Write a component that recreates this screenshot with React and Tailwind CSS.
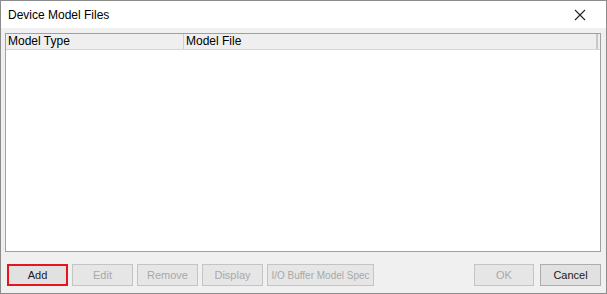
const font = { fontFamily: '"Liberation Sans", Arial, sans-serif' };

function Btn({ label, w, disabled, focused, small }) {
    return (
        <div
            className={`h-[22px] ${w} flex items-center justify-center whitespace-nowrap ${small ? "text-[10px]" : "text-[11px]"} border ${
                focused
                    ? "border-[#e8141c] border-2 bg-[#e1e1e1] text-[#1a1a1a]"
                    : disabled
                    ? "border-[#c4c4c4] bg-[#e6e6e6] text-[#a8a8a8]"
                    : "border-[#adadad] bg-[#e1e1e1] text-[#1a1a1a]"
            }`}
        >
            {label}
        </div>
    );
}

export default function App() {
    return (
        <div className="w-[607px] h-[294px] border border-[#8c8c8c] flex flex-col bg-[#f0f0f0]" style={font}>
            {/* Title bar */}
            <div className="h-[27px] bg-white flex items-center justify-between pl-[7px] pr-[20px]">
                <span className="text-[12px] text-black">Device Model Files</span>
                <svg width="12" height="12" viewBox="0 0 12 12">
                    <path d="M1 1L11 11M11 1L1 11" stroke="#222" strokeWidth="1.1" />
                </svg>
            </div>

            {/* List */}
            <div className="mt-[5px] ml-[4px] mr-[5px] h-[219px] bg-white border border-[#a0a0a0] flex flex-col">
                <div className="h-[16px] flex bg-[#efefef] border-b border-[#d6d6d6] text-[12px] text-black leading-[15px]">
                    <div className="w-[178px] pl-[2px] border-r border-[#cfcfcf]">Model Type</div>
                    <div className="flex-1 pl-[2px] border-r-2 border-[#c8c8c8]">Model File</div>
                    <div className="w-[2px]" />
                </div>
            </div>

            {/* Buttons */}
            <div className="mt-[12px] flex items-center pl-[6px] pr-[5px]">
                <div className="flex gap-[4px]">
                    <Btn label="Add" w="w-[61px]" focused />
                    <Btn label="Edit" w="w-[61px]" disabled />
                    <Btn label="Remove" w="w-[61px]" disabled />
                    <Btn label="Display" w="w-[61px]" disabled />
                    <Btn label="I/O Buffer Model Spec" w="w-[107px]" disabled small />
                </div>
                <div className="ml-auto flex gap-[6px]">
                    <Btn label="OK" w="w-[60px]" disabled />
                    <Btn label="Cancel" w="w-[61px]" />
                </div>
            </div>
        </div>
    );
}
